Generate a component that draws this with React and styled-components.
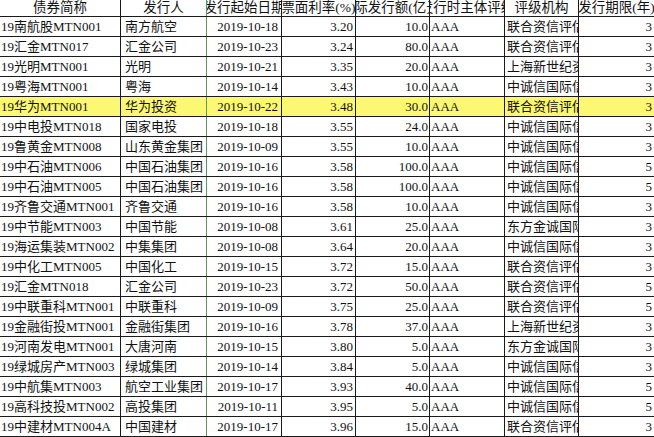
import React from "react";
import styled, { createGlobalStyle } from "styled-components";

const GlobalStyle = createGlobalStyle`
  html, body {
    margin: 0;
    padding: 0;
    background: #ffffff;
    overflow: hidden;
  }
  body {
    font-family: "Liberation Serif", "Noto Sans CJK SC", serif;
    color: #111111;
  }
`;

const columns = [
  { key: "name", title: "债券简称", width: 121, align: "left", pad: "0 0 0 1px" },
  { key: "issuer", title: "发行人", width: 86, align: "left", pad: "0 0 0 4px", line: "#5e9460" },
  { key: "date", title: "发行起始日期", width: 75, align: "right", pad: "0 3px 0 0" },
  { key: "rate", title: "票面利率(%)", width: 74, align: "right", pad: "0 2px 0 0" },
  { key: "amount", title: "实际发行额(亿元)", width: 74, align: "right", pad: "0 1px 0 0" },
  { key: "grade", title: "发行时主体评级", width: 75, align: "left", pad: "0 0 0 1px" },
  { key: "agency", title: "评级机构", width: 74, align: "left", pad: "0 0 0 2px" },
  { key: "term", title: "发行期限(年)", width: 75, align: "right", pad: "0 2px 0 0", last: true },
];

const LH = "联合资信评估股份有限公司";
const ZC = "中诚信国际信用评级有限责任公司";
const SH = "上海新世纪资信评估投资服务有限公司";
const DF = "东方金诚国际信用评估有限公司";

const rows = [
  ["19南航股MTN001", "南方航空", "2019-10-18", "3.20", "10.0", LH, "3"],
  ["19汇金MTN017", "汇金公司", "2019-10-23", "3.24", "80.0", LH, "3"],
  ["19光明MTN001", "光明", "2019-10-21", "3.35", "20.0", SH, "3"],
  ["19粤海MTN001", "粤海", "2019-10-14", "3.43", "10.0", ZC, "3"],
  ["19华为MTN001", "华为投资", "2019-10-22", "3.48", "30.0", LH, "3", true],
  ["19中电投MTN018", "国家电投", "2019-10-18", "3.55", "24.0", ZC, "3"],
  ["19鲁黄金MTN008", "山东黄金集团", "2019-10-09", "3.55", "10.0", ZC, "3"],
  ["19中石油MTN006", "中国石油集团", "2019-10-16", "3.58", "100.0", ZC, "5"],
  ["19中石油MTN005", "中国石油集团", "2019-10-16", "3.58", "100.0", ZC, "5"],
  ["19齐鲁交通MTN001", "齐鲁交通", "2019-10-16", "3.58", "10.0", ZC, "3"],
  ["19中节能MTN003", "中国节能", "2019-10-08", "3.61", "25.0", DF, "3"],
  ["19海运集装MTN002", "中集集团", "2019-10-08", "3.64", "20.0", ZC, "3"],
  ["19中化工MTN005", "中国化工", "2019-10-15", "3.72", "15.0", LH, "3"],
  ["19汇金MTN018", "汇金公司", "2019-10-23", "3.72", "50.0", LH, "5"],
  ["19中联重科MTN001", "中联重科", "2019-10-09", "3.75", "25.0", LH, "5"],
  ["19金融街投MTN001", "金融街集团", "2019-10-16", "3.78", "37.0", SH, "3"],
  ["19河南发电MTN001", "大唐河南", "2019-10-15", "3.80", "5.0", DF, "3"],
  ["19绿城房产MTN003", "绿城集团", "2019-10-14", "3.84", "5.0", ZC, "3"],
  ["19中航集MTN003", "航空工业集团", "2019-10-17", "3.93", "40.0", ZC, "5"],
  ["19高科技投MTN002", "高投集团", "2019-10-11", "3.95", "5.0", ZC, "5"],
  ["19中建材MTN004A", "中国建材", "2019-10-17", "3.96", "15.0", LH, "3"],
];

const Sheet = styled.div`
  width: 654px;
  height: 437px;
  display: flex;
  flex-direction: column;
  overflow: hidden;
`;

const Row = styled.div`
  flex: none;
  display: grid;
  grid-template-columns: ${columns.map((c) => c.width + "px").join(" ")};
  box-sizing: border-box;
  height: ${(p) => p.$height}px;
  border-bottom: 1px solid #1a1a1a;
  background: ${(p) => (p.$highlight ? "#fdf871" : "#ffffff")};
`;

const HeadCell = styled.div`
  display: flex;
  justify-content: center;
  align-items: center;
  overflow: hidden;
  white-space: nowrap;
  font-size: 13.5px;
  line-height: 15px;
  padding-bottom: 1px;
  box-sizing: border-box;
  border-right: ${(p) => (p.$last ? "none" : `1px solid ${p.$line || "#1a1a1a"}`)};
`;

const Cell = styled.div`
  display: flex;
  align-items: center;
  justify-content: ${(p) => (p.$align === "right" ? "flex-end" : "flex-start")};
  padding: ${(p) => p.$pad};
  overflow: hidden;
  white-space: nowrap;
  font-size: 13px;
  line-height: 17px;
  box-sizing: border-box;
  border-right: ${(p) => (p.$last ? "none" : `1px solid ${p.$line || "#1a1a1a"}`)};
`;

export default function App() {
  return (
    <>
      <GlobalStyle />
      <Sheet>
        <Row $height={17}>
          {columns.map((c) => (
            <HeadCell key={c.key} $line={c.line} $last={c.last}>
              {c.title}
            </HeadCell>
          ))}
        </Row>
        {rows.map((r) => {
          const [name, issuer, date, rate, amount, agency, term, highlight] = r;
          const values = [name, issuer, date, rate, amount, "AAA", agency, term];
          return (
            <Row key={name} $height={20} $highlight={highlight}>
              {columns.map((c, i) => (
                <Cell
                  key={c.key}
                  $align={c.align}
                  $pad={c.pad}
                  $line={c.line}
                  $last={c.last}
                >
                  {values[i]}
                </Cell>
              ))}
            </Row>
          );
        })}
      </Sheet>
    </>
  );
}
